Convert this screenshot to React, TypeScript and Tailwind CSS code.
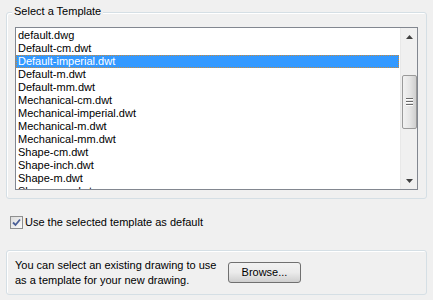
import React from "react";

const items = [
  "default.dwg",
  "Default-cm.dwt",
  "Default-imperial.dwt",
  "Default-m.dwt",
  "Default-mm.dwt",
  "Mechanical-cm.dwt",
  "Mechanical-imperial.dwt",
  "Mechanical-m.dwt",
  "Mechanical-mm.dwt",
  "Shape-cm.dwt",
  "Shape-inch.dwt",
  "Shape-m.dwt",
  "Shape-mm.dwt",
];

export default function App() {
  return (
    <div
      className="w-[433px] h-[300px] bg-[#f0f0f0] text-[11px] text-black pl-[6px] pr-[6px] pt-[12px] flex flex-col"
      style={{ fontFamily: '"Liberation Sans", Arial, sans-serif' }}
    >
      {/* Group 1 */}
      <div className="relative w-[421px] h-[187px] border border-[#d5dfe5] rounded-[3px] shadow-[inset_1px_1px_0_#fff] pt-[14px] pl-[8px]">
        <span className="absolute left-[5px] top-[-8px] px-[2px] bg-[#f0f0f0] leading-[13px]">
          Select a Template
        </span>
        <div className="w-[403px] h-[163px] border border-[#828790] bg-white flex overflow-hidden">
          <div className="flex-1 flex flex-col pt-[1px] overflow-hidden">
            {items.map((it, i) => (
              <div
                key={it}
                className={
                  i === 2
                    ? "h-[13px] shrink-0 leading-[13px] pl-[2px] bg-[#3399ff] text-white outline outline-1 outline-dotted outline-[#c98a3a] -outline-offset-1 mr-[1px]"
                    : "h-[13px] shrink-0 leading-[13px] pl-[2px]"
                }
              >
                {it}
              </div>
            ))}
          </div>
          {/* scrollbar */}
          <div className="w-[17px] h-full bg-[#f0f0f0] border-l border-[#e8e8e8] flex flex-col items-center">
            <div className="h-[17px] w-full flex items-center justify-center">
              <svg width="7" height="4" viewBox="0 0 7 4">
                <path d="M3.5 0 L7 4 L0 4 Z" fill="#404040" />
              </svg>
            </div>
            <div className="h-[30px]" />
            <div className="w-[15px] h-[54px] border border-[#9a9a9a] rounded-[2px] bg-gradient-to-r from-[#f2f2f2] via-[#e6e6e6] to-[#cfcfcf] flex flex-col items-center justify-center gap-[1px]">
              <div className="w-[7px] h-[2px] bg-[#6a6a6a] border-b border-[#fff]" />
              <div className="w-[7px] h-[2px] bg-[#6a6a6a] border-b border-[#fff]" />
              <div className="w-[7px] h-[2px] bg-[#6a6a6a] border-b border-[#fff]" />
            </div>
            <div className="flex-1" />
            <div className="h-[17px] w-full flex items-center justify-center">
              <svg width="7" height="4" viewBox="0 0 7 4">
                <path d="M0 0 L7 0 L3.5 4 Z" fill="#404040" />
              </svg>
            </div>
          </div>
        </div>
      </div>

      {/* Checkbox */}
      <div className="flex items-center mt-[17px] ml-[4px] h-[13px]">
        <div className="w-[13px] h-[13px] border border-[#8e8f8f] bg-gradient-to-br from-[#dcdcdc] to-[#fbfbfb] flex items-center justify-center">
          <svg width="9" height="9" viewBox="0 0 9 9">
            <path d="M1 4.5 L3.5 7 L8 1.5" stroke="#4a5f97" strokeWidth="1.8" fill="none" />
          </svg>
        </div>
        <span className="ml-[2px] leading-[13px]">Use the selected template as default</span>
      </div>

      {/* Group 2 */}
      <div className="mt-[21px] w-[421px] h-[45px] border border-[#d5dfe5] rounded-[3px] shadow-[inset_1px_1px_0_#fff] flex items-center pl-[8px]">
        <div className="leading-[15px] w-[204px]">
          You can select an existing drawing to use
          <br />
          as a template for your new drawing.
        </div>
        <button className="ml-[9px] w-[73px] h-[21px] border border-[#707070] rounded-[3px] bg-gradient-to-b from-[#f2f2f2] via-[#ebebeb] to-[#cfcfcf] text-[11px] leading-[19px]">
          Browse...
        </button>
      </div>
    </div>
  );
}
